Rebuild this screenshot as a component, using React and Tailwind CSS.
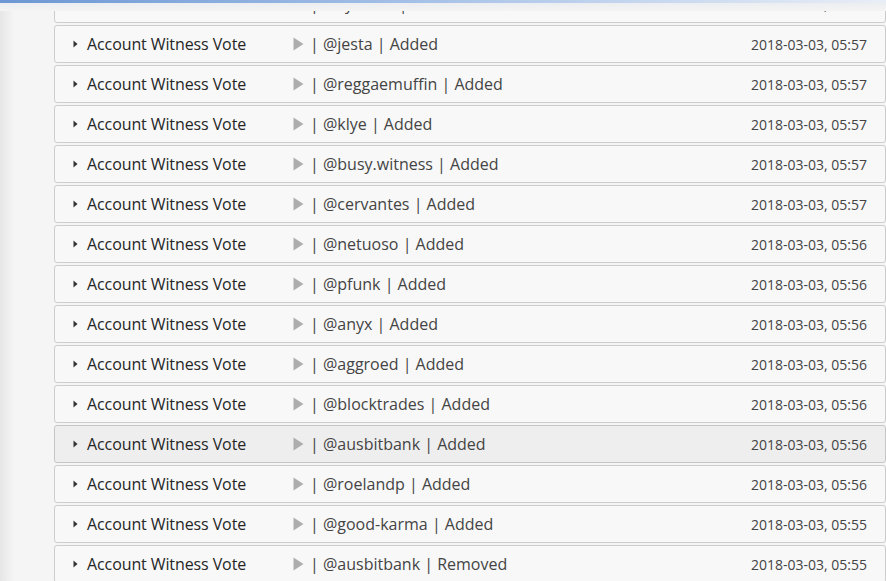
import React from 'react';

const ops = [
  { who: '@cyberrn', action: 'Added', time: '2018-03-03, 05:57' },
  { who: '@jesta', action: 'Added', time: '2018-03-03, 05:57' },
  { who: '@reggaemuffin', action: 'Added', time: '2018-03-03, 05:57' },
  { who: '@klye', action: 'Added', time: '2018-03-03, 05:57' },
  { who: '@busy.witness', action: 'Added', time: '2018-03-03, 05:57' },
  { who: '@cervantes', action: 'Added', time: '2018-03-03, 05:57' },
  { who: '@netuoso', action: 'Added', time: '2018-03-03, 05:56' },
  { who: '@pfunk', action: 'Added', time: '2018-03-03, 05:56' },
  { who: '@anyx', action: 'Added', time: '2018-03-03, 05:56' },
  { who: '@aggroed', action: 'Added', time: '2018-03-03, 05:56' },
  { who: '@blocktrades', action: 'Added', time: '2018-03-03, 05:56' },
  { who: '@ausbitbank', action: 'Added', time: '2018-03-03, 05:56', hover: true },
  { who: '@roelandp', action: 'Added', time: '2018-03-03, 05:56' },
  { who: '@good-karma', action: 'Added', time: '2018-03-03, 05:55' },
  { who: '@ausbitbank', action: 'Removed', time: '2018-03-03, 05:55' },
];

const Caret = () => (
  <svg width="5" height="8" viewBox="0 0 5 8" className="shrink-0">
    <path d="M0.5 0.5 L4.5 4 L0.5 7.5 Z" fill="#333" />
  </svg>
);

const Play = () => (
  <svg width="11" height="14" viewBox="0 0 11 14" className="shrink-0">
    <path d="M0.5 0.5 L10.5 7 L0.5 13.5 Z" fill="#adadad" />
  </svg>
);

const OpRow = ({ op }) => (
  <div
    className={`flex items-center h-[38px] border rounded-[3px] pl-[18px] pr-[18px] ${
      op.hover ? 'bg-[#eeeeee] border-[#c6c6c6]' : 'bg-[#f8f8f8] border-[#cdcdcd]'
    }`}
  >
    <Caret />
    <span className="ml-[9px] w-[206px] shrink-0 text-[16px] tracking-[-0.1px] text-[#262626]">Account Witness Vote</span>
    <Play />
    <span className="ml-[6px] text-[16px] text-[#444] whitespace-nowrap">
      | {op.who} | {op.action}
    </span>
    <span className="ml-auto text-[14px] text-[#444] whitespace-nowrap">{op.time}</span>
  </div>
);

export default function App() {
  return (
    <div
      className="relative h-[581px] w-[886px] overflow-hidden bg-[#f5f5f5]"
      style={{ fontFamily: '"Open Sans", "Noto Sans", sans-serif' }}
    >
      {/* left edge shade */}
      <div className="absolute left-0 top-0 bottom-0 w-[14px] bg-gradient-to-r from-[#e6e6e6] to-transparent" />
      <div className="pl-[54px] -mt-[15px] flex flex-col gap-[2px]">
        {ops.map((op, i) => (
          <OpRow key={i} op={op} />
        ))}
      </div>
      {/* top header edge */}
      <div className="absolute top-0 left-0 right-0 h-[11px] bg-gradient-to-b from-[#e9ebef] to-[#f4f4f4]" />
      <div className="absolute top-0 left-0 right-0 h-[3px] bg-gradient-to-r from-[#6c97d4] via-[#a9c3e8] to-[#e9eef6]" />
    </div>
  );
}
